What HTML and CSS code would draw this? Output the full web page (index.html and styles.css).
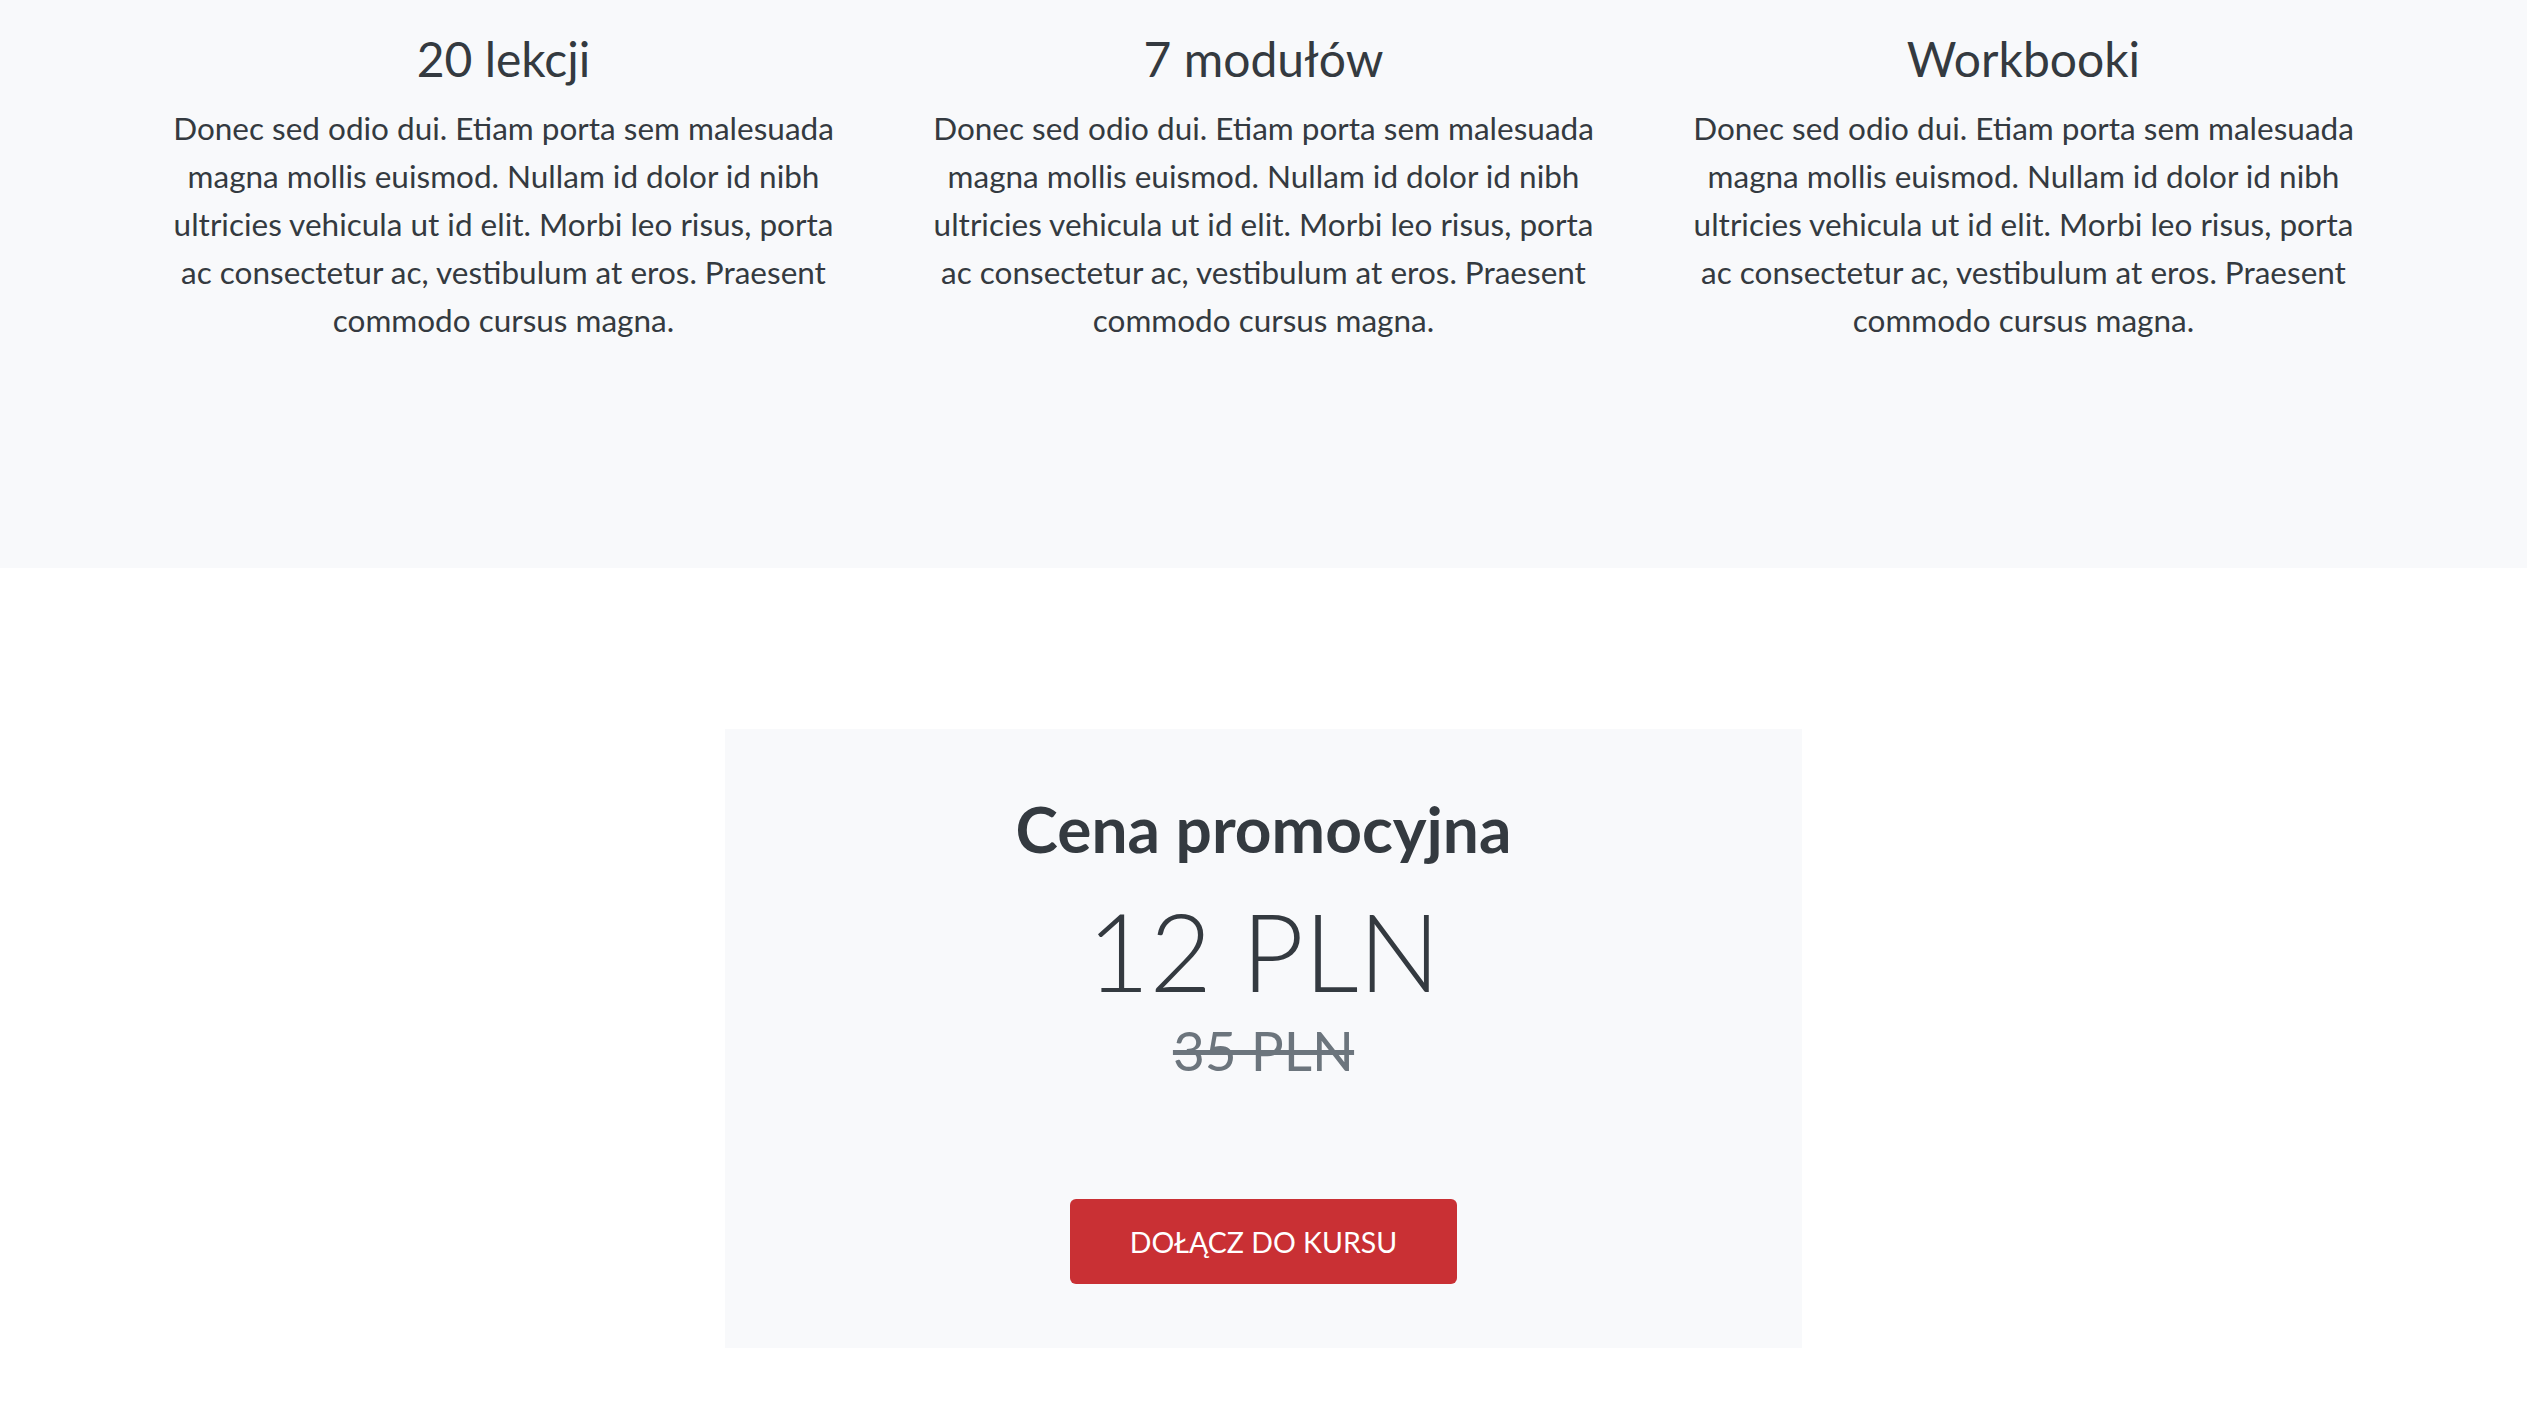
FILE: index.html
```html
<!DOCTYPE html>
<html lang="pl">
<head>
<meta charset="utf-8">
<title>Kurs</title>
<link rel="stylesheet" href="styles.css">
</head>
<body>
<section class="features">
  <div class="container">
    <div class="feature">
      <h3 class="feature-title">20 lekcji</h3>
      <p class="feature-text">Donec sed odio dui. Etiam porta sem malesuada magna mollis euismod. Nullam id dolor id nibh ultricies vehicula ut id elit. Morbi leo risus, porta ac consectetur ac, vestibulum at eros. Praesent commodo cursus magna.</p>
    </div>
    <div class="feature">
      <h3 class="feature-title">7 modułów</h3>
      <p class="feature-text">Donec sed odio dui. Etiam porta sem malesuada magna mollis euismod. Nullam id dolor id nibh ultricies vehicula ut id elit. Morbi leo risus, porta ac consectetur ac, vestibulum at eros. Praesent commodo cursus magna.</p>
    </div>
    <div class="feature">
      <h3 class="feature-title">Workbooki</h3>
      <p class="feature-text">Donec sed odio dui. Etiam porta sem malesuada magna mollis euismod. Nullam id dolor id nibh ultricies vehicula ut id elit. Morbi leo risus, porta ac consectetur ac, vestibulum at eros. Praesent commodo cursus magna.</p>
    </div>
  </div>
</section>
<section class="pricing">
  <div class="price-card">
    <h2 class="price-title">Cena promocyjna</h2>
    <div class="price-now">12 PLN</div>
    <div class="price-old"><s>35 PLN</s></div>
    <a class="btn-join" href="#">DOŁĄCZ DO KURSU</a>
  </div>
</section>
</body>
</html>
```
FILE: styles.css
```css
html, body {
  margin: 0;
  padding: 0;
  background: #ffffff;
}
body {
  font-family: Lato, "Open Sans", "Liberation Sans", sans-serif;
  color: #343a40;
}
.features {
  background: #f8f9fb;
  padding: 30px 0 224px;
}
.container {
  width: 2280px;
  margin: 0 auto;
  display: flex;
}
.feature {
  flex: 1 1 0;
  padding: 0 40px;
  text-align: center;
}
.feature-title {
  margin: 0 0 16px;
  font-size: 48px;
  font-weight: 400;
  line-height: 1.2;
}
.feature-text {
  margin: 0;
  font-size: 31.5px;
  line-height: 48px;
}
.pricing {
  padding: 161px 0 62px;
  display: flex;
  justify-content: center;
}
.price-card {
  width: 1077px;
  background: #f8f9fb;
  padding: 62px 0 64px;
  display: flex;
  flex-direction: column;
  align-items: center;
  text-align: center;
}
.price-title {
  margin: 0 0 16px;
  font-size: 64px;
  font-weight: 700;
  line-height: 1.2;
}
.price-now {
  font-size: 108px;
  font-weight: 300;
  line-height: 134px;
}
.price-old {
  font-size: 55px;
  font-weight: 400;
  line-height: 67px;
  color: #6c757d;
  margin-bottom: 115px;
}
.btn-join {
  display: flex;
  align-items: center;
  justify-content: center;
  width: 387px;
  height: 85px;
  box-sizing: border-box;
  background: #c93034;
  color: #ffffff;
  font-size: 28.5px;
  text-decoration: none;
  border-radius: 6px;
}
```
